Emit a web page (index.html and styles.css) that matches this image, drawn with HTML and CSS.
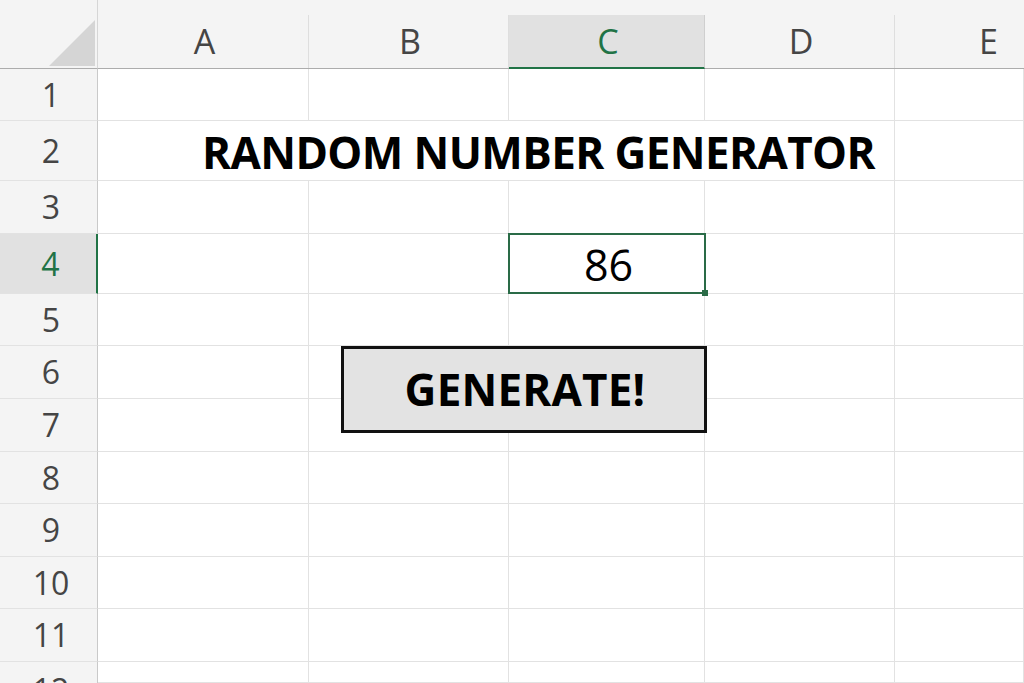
FILE: index.html
```html
<!DOCTYPE html>
<html>
<head>
<meta charset="utf-8">
<link rel="stylesheet" href="styles.css">
</head>
<body>
<div class="wrap">
<div class="sheet">
  <!-- header row -->
  <div class="corner"><div class="tri"></div></div>
  <div class="ch"><span>A</span></div>
  <div class="ch"><span>B</span></div>
  <div class="ch sel"><span>C</span></div>
  <div class="ch"><span>D</span></div>
  <div class="ch ch-e"><span>E</span></div>

  <div class="rh">1</div><div class="c"></div><div class="c"></div><div class="c"></div><div class="c"></div><div class="c"></div>
  <div class="rh">2</div><div class="c title">RANDOM NUMBER GENERATOR</div><div class="c"></div>
  <div class="rh">3</div><div class="c"></div><div class="c"></div><div class="c"></div><div class="c"></div><div class="c"></div>
  <div class="rh rsel">4</div><div class="c"></div><div class="c"></div><div class="c active">86</div><div class="c"></div><div class="c"></div>
  <div class="rh">5</div><div class="c"></div><div class="c"></div><div class="c"></div><div class="c"></div><div class="c"></div>
  <div class="rh">6</div><div class="c"></div><div class="c"></div><div class="c"></div><div class="c"></div><div class="c"></div>
  <div class="rh">7</div><div class="c"></div><div class="c"></div><div class="c"></div><div class="c"></div><div class="c"></div>
  <div class="rh">8</div><div class="c"></div><div class="c"></div><div class="c"></div><div class="c"></div><div class="c"></div>
  <div class="rh">9</div><div class="c"></div><div class="c"></div><div class="c"></div><div class="c"></div><div class="c"></div>
  <div class="rh">10</div><div class="c"></div><div class="c"></div><div class="c"></div><div class="c"></div><div class="c"></div>
  <div class="rh">11</div><div class="c"></div><div class="c"></div><div class="c"></div><div class="c"></div><div class="c"></div>
  <div class="rh rh-last">12</div><div class="c"></div><div class="c"></div><div class="c"></div><div class="c"></div><div class="c"></div>
</div>
<div class="sheet overlay">
  <button class="gen">GENERATE!</button>
</div>
</div>
</body>
</html>
```

FILE: styles.css
```css
html, body {
  margin: 0;
  padding: 0;
  background: #ffffff;
  overflow: hidden;
}
body {
  width: 1024px;
  height: 683px;
}
.wrap {
  display: grid;
  width: 1024px;
  height: 683px;
  overflow: hidden;
}
.sheet {
  grid-area: 1 / 1;
  display: grid;
  grid-template-columns: 98px 211px 200px 196px 190px 129px;
  grid-template-rows: 69px 52px 60px 53px 60px 52px 53px 53px 52px 53px 52px 53px 21px;
  font-family: "Open Sans", "Liberation Sans", sans-serif;
}
.overlay {
  pointer-events: none;
}
.corner {
  background: #f4f4f4;
  border-bottom: 1px solid #acacac;
  border-right: 1px solid #d6d6d6;
  position: relative;
  box-sizing: border-box;
}
.tri {
  position: absolute;
  right: 2px;
  bottom: 2px;
  width: 0;
  height: 0;
  border-style: solid;
  border-width: 0 0 46px 46px;
  border-color: transparent transparent #d5d5d5 transparent;
}
.ch {
  background: #f4f4f4;
  border-bottom: 1px solid #acacac;
  box-sizing: border-box;
  padding-top: 15px;
  display: flex;
}
.ch span {
  flex: 1;
  display: flex;
  align-items: center;
  justify-content: center;
  border-right: 1px solid #dedede;
  font-size: 34px;
  color: #454545;
  line-height: 1;
  padding-bottom: 2px;
  padding-left: 3px;
}
.ch.ch-e span {
  justify-content: flex-start;
  padding-left: 84px;
  border-right: none;
}
.ch.sel span {
  background: #e1e1e1;
  color: #217346;
  border-bottom: 2px solid #217346;
  border-right: 1px solid #cfcfcf;
  padding-bottom: 0;
}
.ch.sel {
  border-bottom: none;
}
.rh {
  background: #f4f4f4;
  border-right: 1px solid #c9c9c9;
  border-bottom: 1px solid #e2e2e2;
  box-sizing: border-box;
  display: flex;
  align-items: center;
  justify-content: center;
  font-size: 32px;
  color: #454545;
  line-height: 1;
  padding-left: 5px;
}
.rh.rh-last {
  align-items: flex-start;
  padding-top: 12px;
  overflow: hidden;
  border-bottom: none;
}
.rh.rsel {
  background: #e1e1e1;
  color: #217346;
  border-right: 2px solid #217346;
}
.c {
  border-right: 1px solid #e2e2e2;
  border-bottom: 1px solid #e2e2e2;
  box-sizing: border-box;
}
.title {
  grid-column: span 4;
  display: flex;
  align-items: center;
  padding-left: 104px;
  padding-top: 2px;
  font-weight: 700;
  font-size: 44px;
  letter-spacing: -0.6px;
  color: #000;
  white-space: nowrap;
}
.active {
  position: relative;
  display: flex;
  align-items: center;
  justify-content: center;
  font-size: 43px;
  color: #000;
  padding-left: 4px;
  padding-top: 2px;
}
.active::before {
  content: "";
  position: absolute;
  left: -1px;
  top: -1px;
  right: -2px;
  bottom: -1px;
  border: 2px solid #2a6b47;
}
.active::after {
  content: "";
  position: absolute;
  right: -4px;
  bottom: -3px;
  width: 6px;
  height: 6px;
  background: #2a6b47;
}
.gen {
  grid-column: 3 / 5;
  grid-row: 7 / 9;
  margin: 0 -2px 19px 32px;
  background: #e3e3e3;
  border: 3px solid #111;
  box-sizing: border-box;
  font-family: "Open Sans", "Liberation Sans", sans-serif;
  font-weight: 700;
  font-size: 44px;
  letter-spacing: 0.2px;
  color: #000;
  padding: 0 0 2px 2px;
  line-height: 1;
}
```
